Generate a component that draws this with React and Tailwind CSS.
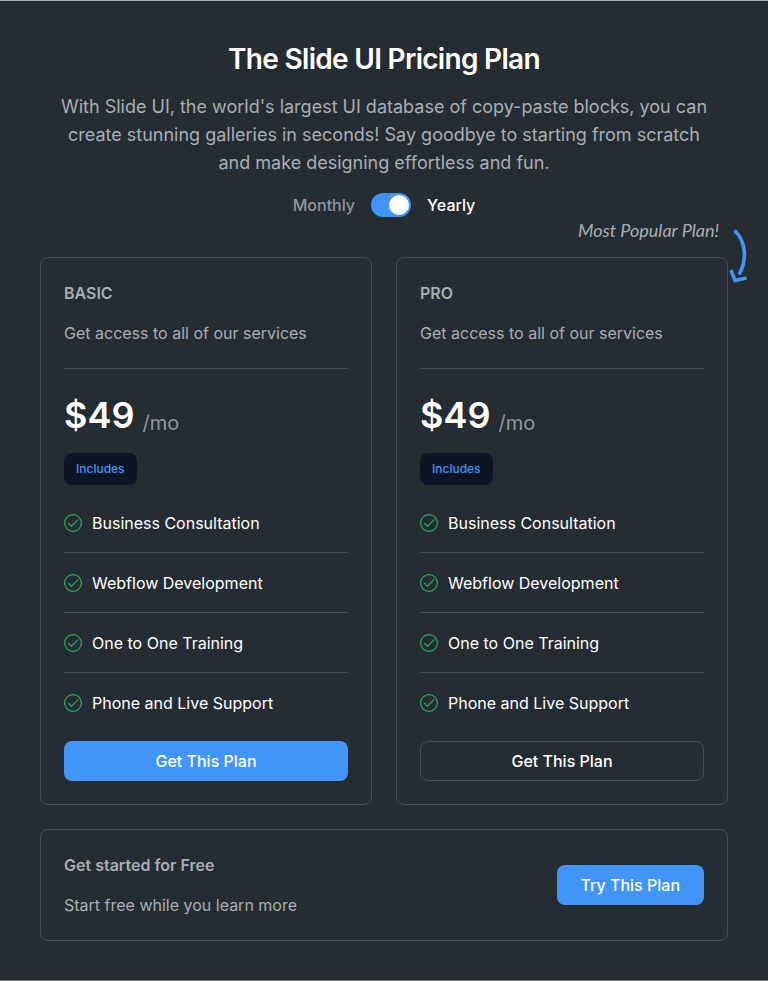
import React from "react";

const FEATURES = [
  "Business Consultation",
  "Webflow Development",
  "One to One Training",
  "Phone and Live Support",
];

function CheckIcon() {
  return (
    <svg className="h-[18px] w-[18px] shrink-0 text-[#27ae60]" viewBox="0 0 18 18" fill="none" stroke="currentColor" aria-hidden="true">
      <circle cx="9" cy="9" r="8.4" strokeWidth="1.2" />
      <path d="M4.6 9.4 L7.4 12.3 L13.8 5.9" strokeWidth="1.2" strokeLinecap="round" strokeLinejoin="round" />
    </svg>
  );
}

function PopularNote() {
  return (
    <div className="absolute -top-10 right-2 font-['Lucida_Handwriting','Lato',cursive] text-lg leading-6 whitespace-nowrap text-[#a9aeb4] italic">
      Most Popular Plan!
      <svg className="absolute top-2 -right-8 h-16 w-8 text-[#4195f8]" viewBox="0 0 32 64" fill="none" stroke="currentColor" strokeWidth="3.6" aria-hidden="true">
        <path d="M15.500 4.500C27 15 28.500 34 20 48.500" />
        <path d="M12 44L16 54.500L27.500 52" />
      </svg>
    </div>
  );
}

function PlanCard({ name, primary, note }) {
  return (
    <section className="relative rounded-lg border border-[#454d54] p-[23px]">
      {note && <PopularNote />}
      <h2 className="text-base leading-6 font-semibold text-[#a9aeb4]">{name}</h2>
      <p className="mt-4 border-b border-[#454d54] pb-[23px] text-base leading-6 text-[#a9aeb4]">
        Get access to all of our services
      </p>
      <div className="mt-6 flex items-end gap-2">
        <span className="text-4xl leading-[44px] font-semibold text-white">$49</span>
        <span className="text-xl leading-7 text-[#91979d]">/mo</span>
      </div>
      <span className="mt-4 inline-flex h-8 items-center rounded-lg bg-[#0e1626] px-3 text-xs font-medium text-[#4195f8]">
        Includes
      </span>
      <ul className="mt-[26px] flex flex-col gap-[18px]">
        {FEATURES.map((feature) => (
          <li
            key={feature}
            className="flex items-center gap-[10px] border-b border-[#454d54] pb-[17px] text-base leading-6 text-white last:border-0 last:pb-0"
          >
            <CheckIcon />
            {feature}
          </li>
        ))}
      </ul>
      <button
        type="button"
        className={
          primary
            ? "mt-[26px] h-10 w-full rounded-lg bg-[#4195f8] text-base font-medium text-white"
            : "mt-[26px] h-10 w-full rounded-lg border border-[#454d54] text-base font-medium text-white"
        }
      >
        Get This Plan
      </button>
    </section>
  );
}

export default function App() {
  return (
    <main className="min-h-screen border-t border-b border-t-[#a4b0b5] border-b-[#70757a] bg-[#252c32] px-10 pt-10 pb-9 font-['Inter',sans-serif]">
      <header className="flex flex-col items-center gap-4 text-center">
        <h1 className="text-[28px] leading-9 font-semibold tracking-tight text-white">The Slide UI Pricing Plan</h1>
        <p className="max-w-[664px] text-lg leading-7 text-[#a9aeb4]">
          With Slide UI, the world's largest UI database of copy-paste blocks, you can create stunning galleries in
          seconds! Say goodbye to starting from scratch and make designing effortless and fun.
        </p>
        <label className="flex h-6 items-center gap-4 text-base leading-6 font-medium">
          <span className="text-[#91979d]">Monthly</span>
          <input
            type="checkbox"
            role="switch"
            aria-label="Yearly billing"
            defaultChecked
            className="flex h-6 w-10 appearance-none items-center rounded-full bg-[#6b7280] px-0.5 before:h-5 before:w-5 before:rounded-full before:bg-white checked:justify-end checked:bg-[#4195f8]"
          />
          <span className="text-white">Yearly</span>
        </label>
      </header>

      <div className="mt-10 grid grid-cols-2 gap-6">
        <PlanCard name="BASIC" primary />
        <PlanCard name="PRO" note />
      </div>

      <section className="mt-6 flex items-center justify-between rounded-lg border border-[#454d54] p-[23px]">
        <div className="flex flex-col gap-4 text-base leading-6 text-[#a9aeb4]">
          <h2 className="font-semibold">Get started for Free</h2>
          <p>Start free while you learn more</p>
        </div>
        <button type="button" className="h-10 rounded-lg bg-[#4195f8] px-6 text-base font-medium text-white">
          Try This Plan
        </button>
      </section>
    </main>
  );
}
